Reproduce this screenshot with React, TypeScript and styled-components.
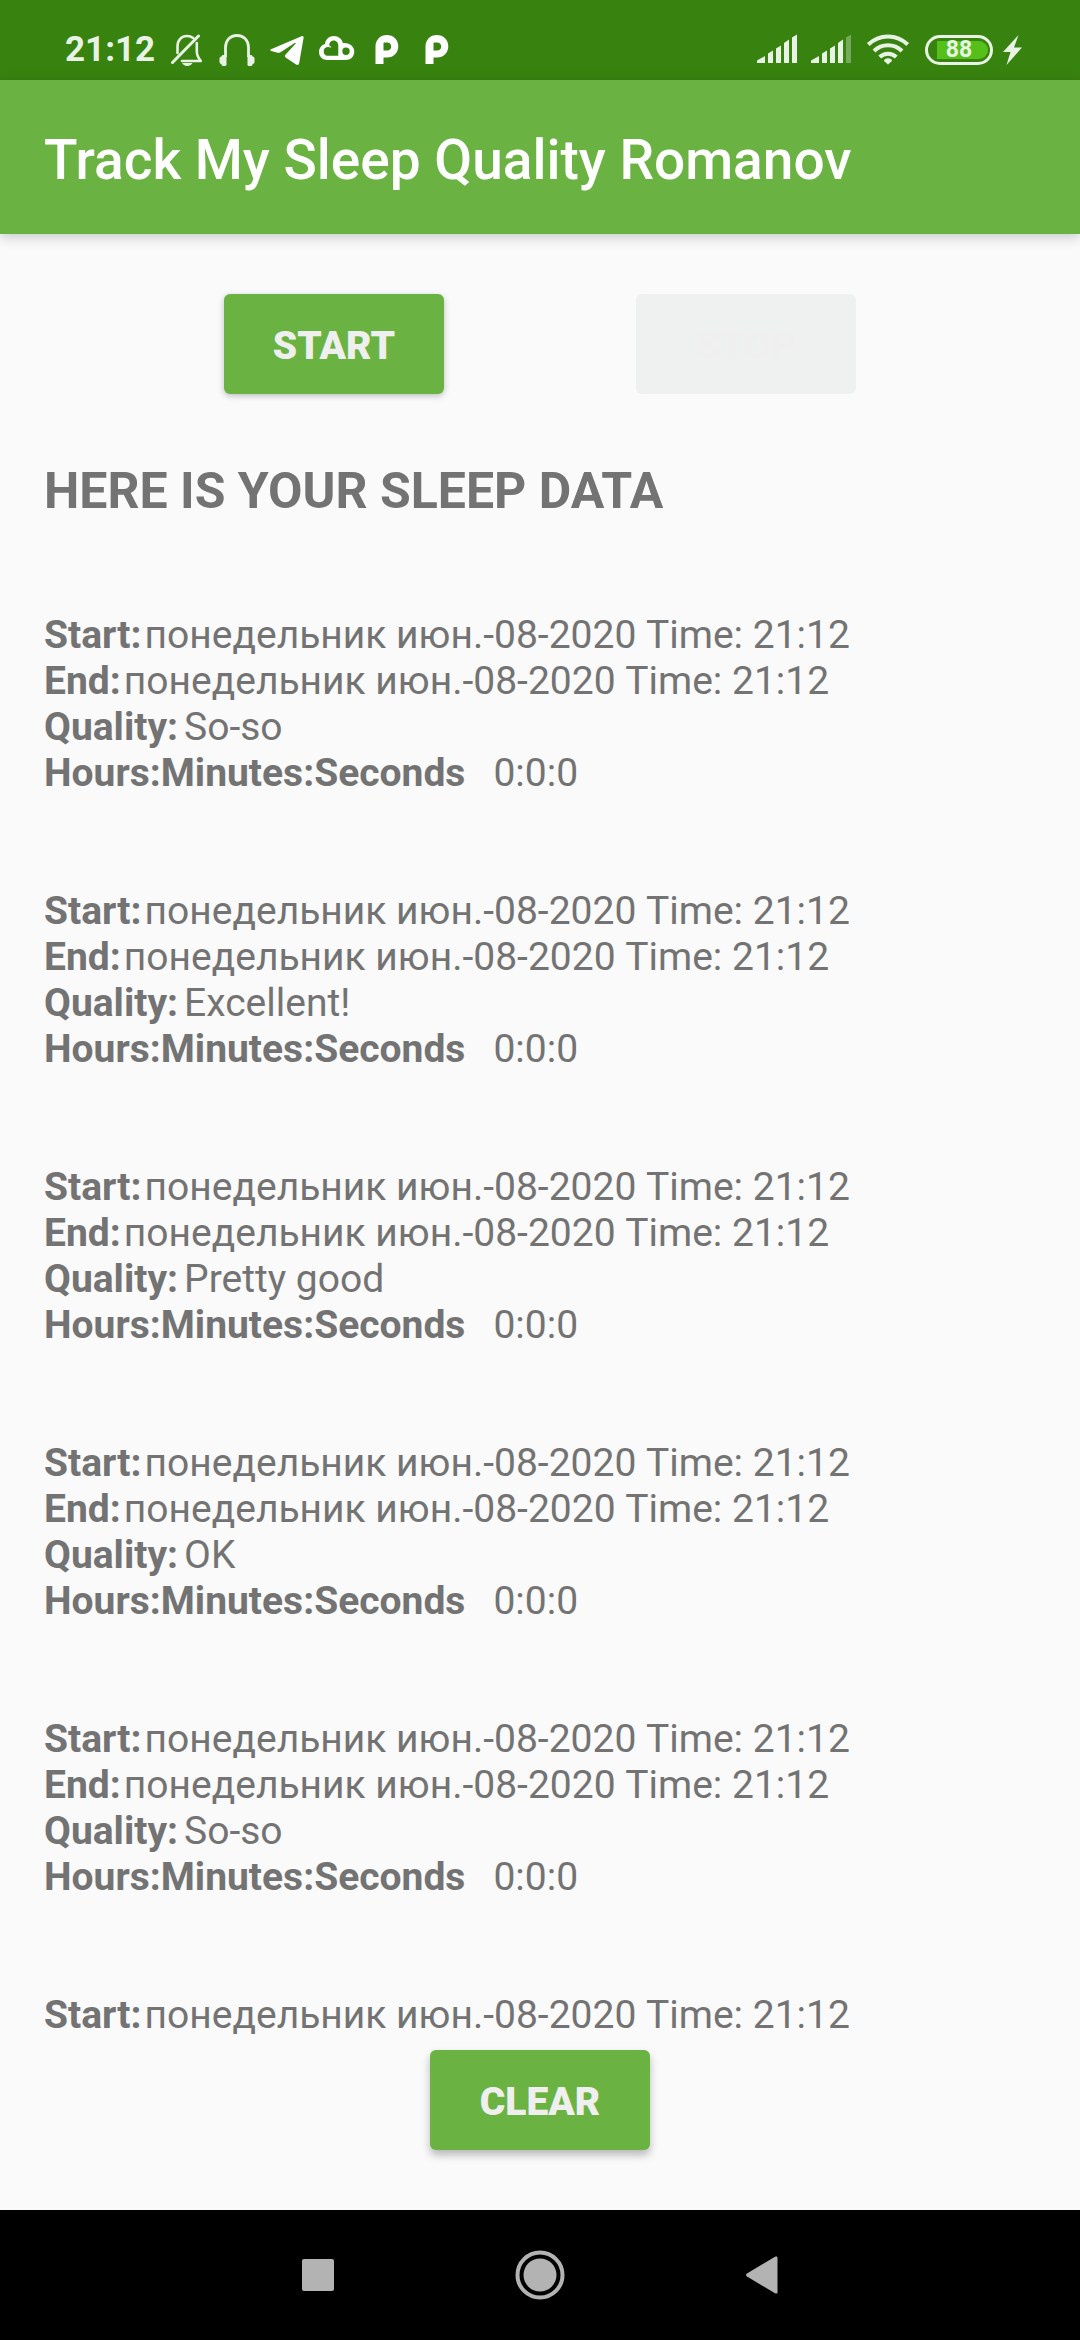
import React from "react";
import styled, { createGlobalStyle } from "styled-components";

const GlobalStyle = createGlobalStyle`
  * { box-sizing: border-box; }
  body {
    margin: 0;
    background: #fafafa;
    font-family: Roboto, "Noto Sans", sans-serif;
  }
`;

const Screen = styled.div`
  display: flex;
  flex-direction: column;
  height: 100vh;
  background: #fafafa;
`;

const StatusBar = styled.header`
  display: flex;
  flex: none;
  align-items: center;
  justify-content: space-between;
  height: 80px;
  padding: 20px 58px 0 65px;
  background: #388310;
  color: #e9f3e5;
`;

const StatusGroup = styled.div<{ $gap: number }>`
  display: flex;
  align-items: center;
  gap: ${(p) => p.$gap}px;
`;

const Clock = styled.time`
  width: 92px;
  font-size: 35px;
  line-height: 40px;
  font-weight: 700;
`;

const Glyph = styled.svg`
  display: block;
  flex: none;
  fill: currentColor;
`;

const Notification = styled(Glyph)<{ $bright?: boolean }>`
  width: 40px;
  height: 32px;
  color: ${(p) => (p.$bright ? "#ffffff" : "#e9f3e5")};
`;

const Battery = styled.div`
  display: flex;
  width: 68px;
  height: 30px;
  padding: 3px 2px 3px 9px;
  border: 3px solid currentColor;
  border-radius: 15px;
`;

const Charge = styled.span`
  flex: 1;
  padding-right: 7px;
  border-radius: 0 9px 9px 0;
  background: #55c01a;
  font-size: 23px;
  line-height: 18px;
  font-weight: 700;
  text-align: center;
`;

const AppBar = styled.div`
  display: flex;
  flex: none;
  align-items: center;
  height: 154px;
  padding: 6px 44px 0;
  background: #6ab343;
  box-shadow: 0 3px 12px rgba(0, 0, 0, 0.2);
`;

const Title = styled.h1`
  margin: 0;
  color: #ffffff;
  font-size: 55px;
  line-height: 64px;
  font-weight: 500;
`;

const Content = styled.main`
  display: flex;
  flex: 1;
  flex-direction: column;
  min-height: 0;
  padding: 60px 0;
`;

const Controls = styled.div`
  display: flex;
  flex: none;
  justify-content: center;
  gap: 192px;
`;

const ActionButton = styled.button<{ $raised?: boolean }>`
  width: 220px;
  height: 100px;
  padding: 4px 0 0;
  border: 0;
  border-radius: 6px;
  background: #6ab343;
  color: #efefef;
  box-shadow: ${(p) =>
    p.$raised ? "0 5px 8px rgba(0, 0, 0, 0.27)" : "0 2px 6px rgba(0, 0, 0, 0.24)"};
  font-family: inherit;
  font-size: 39px;
  line-height: 46px;
  font-weight: 900;
  text-transform: uppercase;

  &:disabled {
    background: #eff1f0;
    color: #f0efef;
    box-shadow: none;
  }
`;

const SleepLog = styled.section`
  flex: 1;
  min-height: 0;
  margin: 68px 0 10px;
  padding: 0 44px;
  overflow-y: auto;
  scrollbar-width: none;
  color: #737373;
`;

const LogHeading = styled.h2`
  margin: 0;
  font-size: 50px;
  line-height: 58px;
  font-weight: 700;
  text-transform: uppercase;
`;

const Nights = styled.ul`
  margin: 0;
  padding: 0;
  list-style: none;
`;

const Night = styled.li`
  padding-top: 92px;
  font-size: 39px;
  line-height: 46px;
`;

const Line = styled.p`
  margin: 0;
`;

const Label = styled.strong<{ $space: number }>`
  margin-right: ${(p) => p.$space}px;
  font-weight: 700;
`;

const NavBar = styled.nav`
  display: flex;
  flex: none;
  align-items: center;
  justify-content: center;
  gap: 122px;
  height: 130px;
  background: #000000;
`;

const NavButton = styled.button`
  display: grid;
  place-items: center;
  width: 100px;
  height: 100px;
  padding: 0;
  border: 0;
  background: none;
  color: #b3b3b3;
`;

const DATE = "понедельник июн.-08-2020 Time: 21:12";

type SleepNight = { start: string; end?: string; quality?: string; duration?: string };

const rated = (quality: string): SleepNight => ({
  start: DATE,
  end: DATE,
  quality,
  duration: "0:0:0",
});

const NIGHTS: SleepNight[] = [
  rated("So-so"),
  rated("Excellent!"),
  rated("Pretty good"),
  rated("OK"),
  rated("So-so"),
  { start: DATE },
];

const BellOff = () => (
  <Notification viewBox="0 0 40 32" aria-label="Silent mode">
    <g fill="none" stroke="currentColor" strokeWidth="2.6" strokeLinejoin="round" strokeLinecap="round">
      <path d="M10.5 19V12.5C10.5 6 14.5 2 20 2c2.500 0 4.500.7 6.200 2" />
      <path d="M29.800 9v8.500c0 3.500 1.200 6 4 9.500H15" />
      <path d="M5.500 28.500L31.500 2" strokeWidth="3" />
    </g>
    <path d="M15 29h10.500c-1.200 2-3 3-5.200 3s-4.200-1-5.300-3z" />
  </Notification>
);

const Headphones = () => (
  <Notification viewBox="0 0 40 32" aria-label="Headphones connected">
    <path
      d="M8.500 23V13.500C8.500 6.500 13 1.500 20 1.500s11.500 5 11.500 12V23"
      fill="none"
      stroke="currentColor"
      strokeWidth="2.800"
    />
    <rect x="4.500" y="21" width="5" height="11" rx="1.500" />
    <rect x="2.500" y="22.500" width="4" height="7.500" rx="2" />
    <rect x="30.500" y="21" width="5" height="11" rx="1.500" />
    <rect x="33.500" y="22.500" width="4" height="7.500" rx="2" />
  </Notification>
);

const Telegram = () => (
  <Notification $bright viewBox="0 0 40 32" aria-label="Telegram">
    <path d="M4 15.200L34.500 2.200c1.400-.6 2.300.2 2.100 1.600L32.200 29c-.3 1.800-1.600 2.400-3.100 1.400l-10.500-7c-1-.7-1-1.800-.2-2.600L28.500 9.800c.6-.7 0-1.200-.8-.7L13.500 18.300c-.9.6-1.800.7-2.800.4l-6.500-1.800c-1.200-.4-1.300-1.200-.2-1.700z" />
  </Notification>
);

const Cloud = () => (
  <Notification $bright viewBox="0 0 40 32" aria-label="Cloud storage">
    <path
      fillRule="evenodd"
      d="M10.500 26C5.500 26 2 22.500 2 18c0-4 2.500-7 6-8C8.500 5.500 12 2 17 2c4.500 0 8 3 9 7.200C32.500 8.500 37.300 12.500 37.300 17.500S33.500 26 28.500 26zM10.500 21.700H21.300V12c0-3.200-1.800-5.500-4.600-5.500-2.500 0-4.400 2-4.600 4.600 1 .6 1.800 1.500 2.200 2.700-1.200-.6-2.500-.9-3.800-.8C8.200 13.200 6.700 15 6.700 17.400c0 2.500 1.500 4.300 3.800 4.300zM29 13.600a3.700 3.700 0 1 0 0 7.400 3.700 3.700 0 1 0 0-7.400z"
    />
  </Notification>
);

const ParkingPin = () => (
  <Notification $bright viewBox="0 0 40 32" aria-label="Parking app">
    <path
      fillRule="evenodd"
      d="M8.500 30V12.500C8.500 5.800 13.300 1 19.800 1s11.500 4.800 11.500 11.200S26.500 23.500 20 23.500h-3.500V30zM16.500 9v7.500H20c2.400 0 4.200-1.600 4.200-4S22.400 8.500 20 8.500h-3z"
    />
  </Notification>
);

const Signal = ({ weak = false }: { weak?: boolean }) => (
  <Glyph width="40" height="32" viewBox="0 0 40 32" aria-label="Mobile signal">
    <path d="M0 29v-2.500l8-4.500V29z" />
    <path d="M11 29V19.500L16 16.500V29z" />
    <path d="M19 29V14.500L24 11.500V29z" />
    <path d="M27 29V9L32 5.500V29z" />
    <path d="M35 29V3.500L40 0.500V29z" opacity={weak ? 0.35 : 1} />
  </Glyph>
);

const Wifi = () => (
  <Glyph width="46" height="32" viewBox="0 0 46 32" aria-label="Wi-Fi">
    <g fill="none" stroke="currentColor" strokeWidth="4">
      <path d="M3.300 10.500a28 28 0 0 1 39.400 0" />
      <path d="M9 17a20 20 0 0 1 28 0" />
      <path d="M14.700 23a12 12 0 0 1 16.600 0" />
    </g>
    <path d="M23 30.500l-4-3.500c0-2 2-2.800 4-2.800s4 .8 4 2.800z" />
  </Glyph>
);

const Bolt = () => (
  <Glyph width="19" height="32" viewBox="0 0 19 32" aria-label="Charging">
    <path d="M15.500 1L0 18h7.500L3.500 31 19 13.500h-8z" />
  </Glyph>
);

export default function App() {
  return (
    <>
      <GlobalStyle />
      <Screen>
        <StatusBar>
          <StatusGroup $gap={10}>
            <Clock>21:12</Clock>
            <BellOff />
            <Headphones />
            <Telegram />
            <Cloud />
            <ParkingPin />
            <ParkingPin />
          </StatusGroup>
          <StatusGroup $gap={14}>
            <Signal />
            <Signal weak />
            <Wifi />
            <StatusGroup $gap={10}>
              <Battery>
                <Charge>88</Charge>
              </Battery>
              <Bolt />
            </StatusGroup>
          </StatusGroup>
        </StatusBar>
        <AppBar>
          <Title>Track My Sleep Quality Romanov</Title>
        </AppBar>
        <Content>
          <Controls>
            <ActionButton type="button">Start</ActionButton>
            <ActionButton type="button" disabled>
              Stop
            </ActionButton>
          </Controls>
          <SleepLog>
            <LogHeading>Here is your sleep data</LogHeading>
            <Nights>
              {NIGHTS.map((night, index) => (
                <Night key={index}>
                  <Line>
                    <Label $space={3}>Start:</Label>
                    {night.start}
                  </Line>
                  {night.end && (
                    <Line>
                      <Label $space={3}>End:</Label>
                      {night.end}
                    </Line>
                  )}
                  {night.quality && (
                    <Line>
                      <Label $space={6}>Quality:</Label>
                      {night.quality}
                    </Line>
                  )}
                  {night.duration && (
                    <Line>
                      <Label $space={28}>Hours:Minutes:Seconds</Label>
                      {night.duration}
                    </Line>
                  )}
                </Night>
              ))}
            </Nights>
          </SleepLog>
          <Controls>
            <ActionButton type="button" $raised>
              Clear
            </ActionButton>
          </Controls>
        </Content>
        <NavBar>
          <NavButton type="button" aria-label="Recent apps">
            <Glyph width="32" height="32" viewBox="0 0 32 32">
              <rect width="32" height="32" rx="2" />
            </Glyph>
          </NavButton>
          <NavButton type="button" aria-label="Home">
            <Glyph width="50" height="50" viewBox="0 0 50 50">
              <circle cx="25" cy="25" r="22.500" fill="none" stroke="currentColor" strokeWidth="4" />
              <circle cx="25" cy="25" r="16.500" />
            </Glyph>
          </NavButton>
          <NavButton type="button" aria-label="Back">
            <Glyph width="32" height="38" viewBox="0 0 32 38">
              <path d="M1 17.500L29 .8c1.500-.8 2.500-.3 2.500 1.200v34c0 1.500-1 2-2.500 1.200L1 20.500c-1.300-1-1.300-2 0-3z" />
            </Glyph>
          </NavButton>
        </NavBar>
      </Screen>
    </>
  );
}
